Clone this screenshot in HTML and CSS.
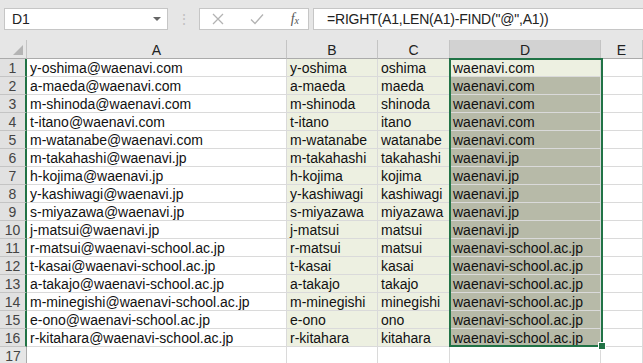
FILE: index.html
```html
<!DOCTYPE html>
<html lang="ja">
<head>
    <meta charset="UTF-8">
    <title>Book1 - Excel</title>
    <link rel="stylesheet" href="styles.css">
</head>
<body>
    <div class="toolbar">
        <div class="namebox">
            <span>D1</span>
            <span class="caret"></span>
        </div>
        <div class="grip">⋮</div>
        <div class="fxbox">
            <svg width="12" height="12" viewBox="0 0 12 12"><path d="M1 1L11 11M11 1L1 11" stroke="#b3b3b3" stroke-width="1.3" fill="none"/></svg>
            <svg width="14" height="12" viewBox="0 0 14 12"><path d="M1 6.5L5 10.5L13 1.5" stroke="#b3b3b3" stroke-width="1.3" fill="none"/></svg>
            <span class="fx">f<sub>x</sub></span>
        </div>
        <div class="formula">=RIGHT(A1,LEN(A1)-FIND("@",A1))</div>
    </div>

    <div class="sheet">
        <div class="row head">
            <div class="corner"><span class="tri"></span></div>
            <div class="ch">A</div>
            <div class="ch">B</div>
            <div class="ch">C</div>
            <div class="ch sel">D</div>
            <div class="ch">E</div>
        </div>
        <div class="row"><div class="rh sel">1</div><div class="c">y-oshima@waenavi.com</div><div class="c fill">y-oshima</div><div class="c fill">oshima</div><div class="c fill">waenavi.com</div><div class="c"></div></div>
        <div class="row"><div class="rh sel">2</div><div class="c">a-maeda@waenavi.com</div><div class="c fill">a-maeda</div><div class="c fill">maeda</div><div class="c shade">waenavi.com</div><div class="c"></div></div>
        <div class="row"><div class="rh sel">3</div><div class="c">m-shinoda@waenavi.com</div><div class="c fill">m-shinoda</div><div class="c fill">shinoda</div><div class="c shade">waenavi.com</div><div class="c"></div></div>
        <div class="row"><div class="rh sel">4</div><div class="c">t-itano@waenavi.com</div><div class="c fill">t-itano</div><div class="c fill">itano</div><div class="c shade">waenavi.com</div><div class="c"></div></div>
        <div class="row"><div class="rh sel">5</div><div class="c">m-watanabe@waenavi.com</div><div class="c fill">m-watanabe</div><div class="c fill">watanabe</div><div class="c shade">waenavi.com</div><div class="c"></div></div>
        <div class="row"><div class="rh sel">6</div><div class="c">m-takahashi@waenavi.jp</div><div class="c fill">m-takahashi</div><div class="c fill">takahashi</div><div class="c shade">waenavi.jp</div><div class="c"></div></div>
        <div class="row"><div class="rh sel">7</div><div class="c">h-kojima@waenavi.jp</div><div class="c fill">h-kojima</div><div class="c fill">kojima</div><div class="c shade">waenavi.jp</div><div class="c"></div></div>
        <div class="row"><div class="rh sel">8</div><div class="c">y-kashiwagi@waenavi.jp</div><div class="c fill">y-kashiwagi</div><div class="c fill">kashiwagi</div><div class="c shade">waenavi.jp</div><div class="c"></div></div>
        <div class="row"><div class="rh sel">9</div><div class="c">s-miyazawa@waenavi.jp</div><div class="c fill">s-miyazawa</div><div class="c fill">miyazawa</div><div class="c shade">waenavi.jp</div><div class="c"></div></div>
        <div class="row"><div class="rh sel">10</div><div class="c">j-matsui@waenavi.jp</div><div class="c fill">j-matsui</div><div class="c fill">matsui</div><div class="c shade">waenavi.jp</div><div class="c"></div></div>
        <div class="row"><div class="rh sel">11</div><div class="c">r-matsui@waenavi-school.ac.jp</div><div class="c fill">r-matsui</div><div class="c fill">matsui</div><div class="c shade">waenavi-school.ac.jp</div><div class="c"></div></div>
        <div class="row"><div class="rh sel">12</div><div class="c">t-kasai@waenavi-school.ac.jp</div><div class="c fill">t-kasai</div><div class="c fill">kasai</div><div class="c shade">waenavi-school.ac.jp</div><div class="c"></div></div>
        <div class="row"><div class="rh sel">13</div><div class="c">a-takajo@waenavi-school.ac.jp</div><div class="c fill">a-takajo</div><div class="c fill">takajo</div><div class="c shade">waenavi-school.ac.jp</div><div class="c"></div></div>
        <div class="row"><div class="rh sel">14</div><div class="c">m-minegishi@waenavi-school.ac.jp</div><div class="c fill">m-minegishi</div><div class="c fill">minegishi</div><div class="c shade">waenavi-school.ac.jp</div><div class="c"></div></div>
        <div class="row"><div class="rh sel">15</div><div class="c">e-ono@waenavi-school.ac.jp</div><div class="c fill">e-ono</div><div class="c fill">ono</div><div class="c shade">waenavi-school.ac.jp</div><div class="c"></div></div>
        <div class="row"><div class="rh sel">16</div><div class="c">r-kitahara@waenavi-school.ac.jp</div><div class="c fill">r-kitahara</div><div class="c fill">kitahara</div><div class="c shade">waenavi-school.ac.jp</div><div class="c"></div></div>
        <div class="row"><div class="rh">17</div><div class="c"></div><div class="c"></div><div class="c"></div><div class="c"></div><div class="c"></div></div>

        <div class="selection"><span class="handle"></span></div>
    </div>
</body>
</html>
```

FILE: styles.css
```css
body {
    margin: 0;
    font-family: 'Liberation Sans', Arial, sans-serif;
    background: #ffffff;
    overflow: hidden;
}
.toolbar {
    display: flex;
    align-items: center;
    height: 40px;
    padding: 0 0 2px 4px;
    box-sizing: border-box;
    background: #e6e6e6;
}
.namebox {
    display: flex;
    align-items: center;
    justify-content: space-between;
    width: 164px;
    height: 22px;
    padding: 0 6px 0 7px;
    box-sizing: border-box;
    background: #fff;
    border: 1px solid #c6c6c6;
    font-size: 14px;
    color: #222;
}
.caret {
    width: 0;
    height: 0;
    border-left: 4px solid transparent;
    border-right: 4px solid transparent;
    border-top: 4px solid #666;
}
.grip {
    width: 31px;
    text-align: center;
    color: #c0c0c0;
    font-size: 14px;
}
.fxbox {
    display: flex;
    align-items: center;
    justify-content: space-between;
    width: 110px;
    height: 22px;
    padding: 0 9px 0 12px;
    box-sizing: border-box;
    background: #fff;
    border: 1px solid #c6c6c6;
}
.fx {
    font-family: 'Liberation Serif', serif;
    font-style: italic;
    font-size: 14px;
    color: #555;
}
.fx sub {
    font-size: 10px;
    vertical-align: -1px;
}
.formula {
    flex: 1;
    height: 22px;
    margin-left: 4px;
    padding-left: 13px;
    box-sizing: border-box;
    background: #fff;
    border: 1px solid #c6c6c6;
    border-right: none;
    font-size: 14px;
    line-height: 20px;
    letter-spacing: -0.2px;
    color: #222;
    white-space: nowrap;
}
.sheet {
    position: relative;
}
.row {
    display: grid;
    grid-template-columns: 27px 260px 91px 72px 151px 42px;
    height: 18px;
}
.row > div {
    box-sizing: border-box;
    padding-top: 1px;
    border-right: 1px solid #dadada;
    border-bottom: 1px solid #dadada;
    font-size: 14px;
    line-height: 17px;
    white-space: nowrap;
    overflow: hidden;
}
.row.head {
    height: 19px;
    background: #e6e6e6;
}
.row.head > div {
    padding-top: 1px;
    line-height: 18px;
    border-color: #c4c4c4;
    border-bottom-color: #ababab;
}
.corner {
    position: relative;
}
.tri {
    position: absolute;
    right: 3px;
    bottom: 3px;
    width: 0;
    height: 0;
    border-left: 10px solid transparent;
    border-bottom: 10px solid #b4b4b4;
}
.ch {
    text-align: center;
    color: #222;
}
.ch.sel {
    background: #d2d2d2;
}
.rh {
    text-align: center;
    color: #444;
    background: #e6e6e6;
}
.row > .rh {
    border-right-color: #ababab;
    border-bottom-color: #c4c4c4;
}
.row > .rh.sel {
    background: #e1e1e1;
    border-right: 2px solid #217346;
}
.c {
    padding-left: 3px;
    color: #111;
}
.c.fill {
    background: #edf0e1;
}
.c.shade {
    background: #b7baa8;
}
.selection {
    position: absolute;
    left: 449px;
    top: 18px;
    width: 154px;
    height: 289px;
    box-sizing: border-box;
    border: 2px solid #217346;
    pointer-events: none;
}
.handle {
    position: absolute;
    right: -5px;
    bottom: -5px;
    width: 6px;
    height: 6px;
    background: #217346;
    border: 1px solid #fff;
}
```
